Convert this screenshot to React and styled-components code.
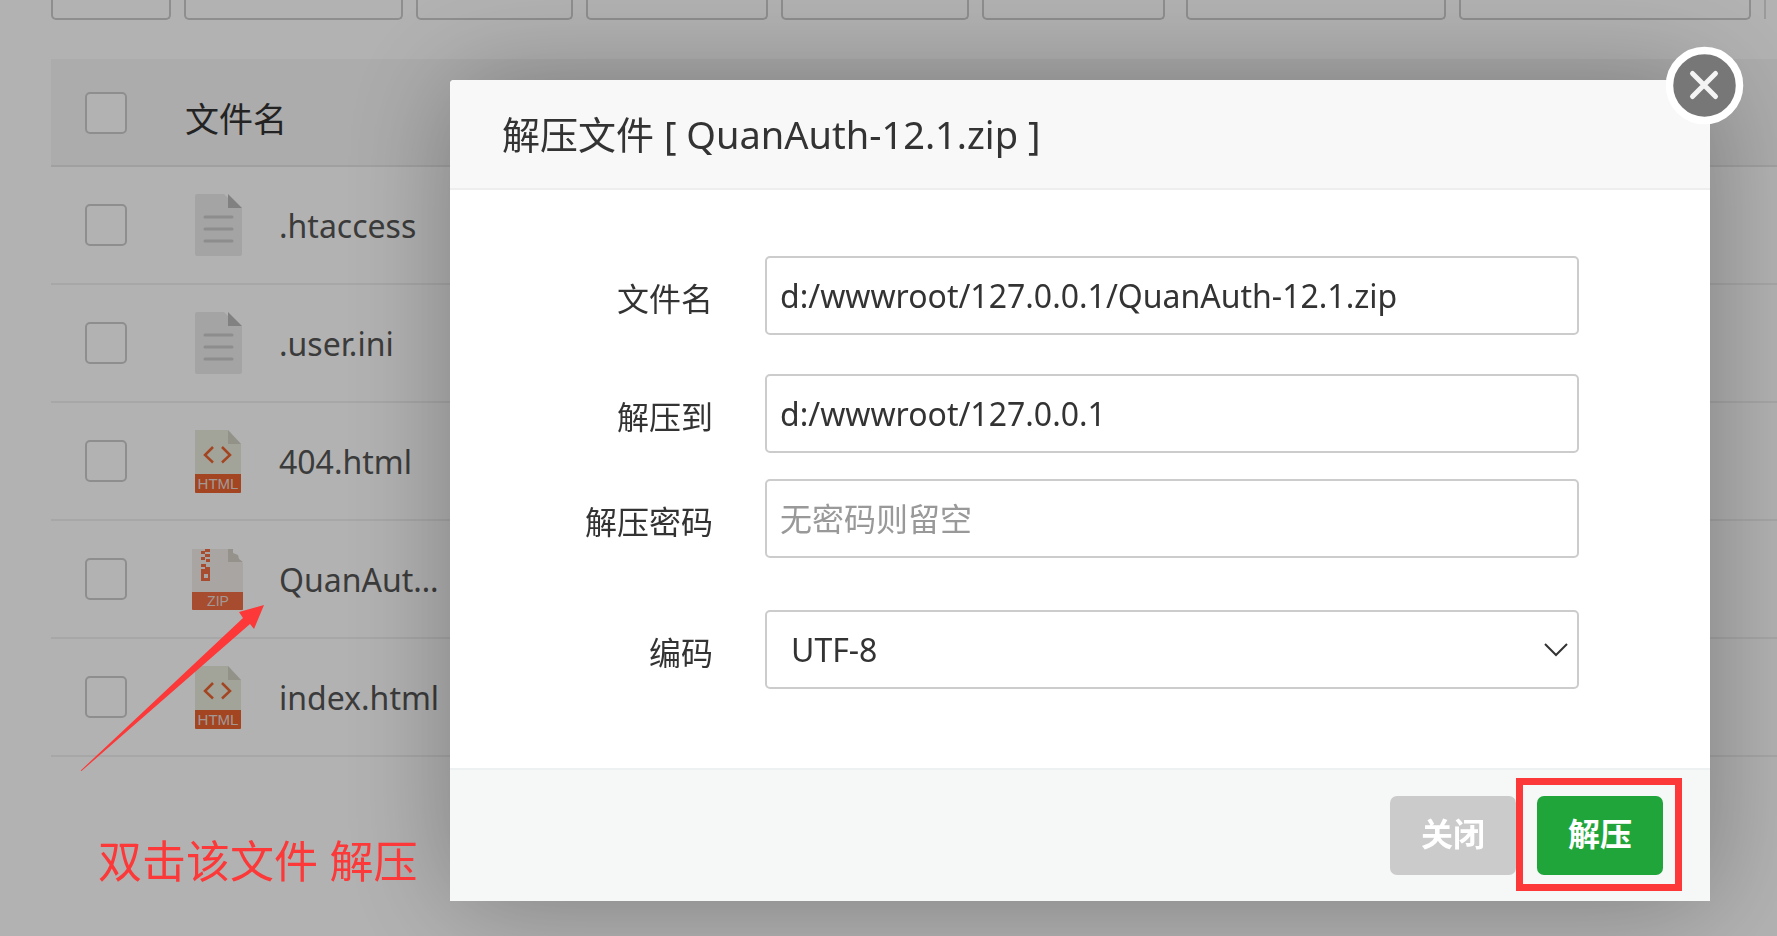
import { useState } from "react";
import styled, { createGlobalStyle } from "styled-components";

const files = [
  { name: ".htaccess", type: "text" },
  { name: ".user.ini", type: "text" },
  { name: "404.html", type: "html" },
  { name: "QuanAuth-12.1.zip", type: "zip" },
  { name: "index.html", type: "html" },
];

const tools = [
  { title: "上传", width: 120 },
  { title: "远程下载", width: 219 },
  { title: "新建", width: 157 },
  { title: "文件夹", width: 182 },
  { title: "收藏夹", width: 188 },
  { title: "分享", width: 183 },
  { title: "终端", width: 260, spaced: true },
  { title: "根目录", width: 292 },
];

const GlobalStyle = createGlobalStyle`
  * {
    box-sizing: border-box;
  }

  body {
    margin: 0;
    background: #fff;
    color: #333;
    font-family: "Noto Sans", "Noto Sans CJK SC", sans-serif;
    font-size: 32px;
  }

  button,
  input,
  select {
    font: inherit;
  }
`;

const Page = styled.div`
  position: relative;
  min-height: 100vh;
  padding-left: 51px;
  overflow: hidden;
`;

const Toolbar = styled.div`
  display: flex;
  gap: 13px;
  height: 59px;
`;

const ToolButton = styled.button`
  flex: none;
  width: ${(props) => props.$width}px;
  height: 20px;
  margin-left: ${(props) => (props.$spaced ? "8px" : "0")};
  padding: 0;
  border: 2px solid #ccc;
  border-top: 0;
  border-radius: 0 0 5px 5px;
  background: #fff;
`;

const ToolDivider = styled.span`
  flex: none;
  width: 2px;
  height: 19px;
  background: #ddd;
`;

const Table = styled.table`
  width: 100%;
  table-layout: fixed;
  border-collapse: separate;
  border-spacing: 0;
`;

const CheckColumn = styled.col`
  width: 119px;
`;

const NameColumn = styled.col`
  width: 272px;
`;

const HeadCell = styled.th`
  height: 108px;
  padding: ${(props) => (props.$check ? "2px 0 0 34px" : "10px 0 0 15px")};
  border-bottom: 2px solid #e6e6e6;
  background: #f6f6f6;
  font-size: 34px;
  font-weight: 400;
  text-align: left;
`;

const Cell = styled.td`
  height: 118px;
  padding: 0 0 0 ${(props) => (props.$check ? "34px" : "20px")};
  border-bottom: 2px solid #efefef;
  color: #555;
`;

const Checkbox = styled.input`
  display: block;
  appearance: none;
  width: 42px;
  height: 42px;
  margin: 0;
  border: 2px solid #ccc;
  border-radius: 5px;
  background: #fff;

  &:checked {
    background: #20a53a;
  }
`;

const FileEntry = styled.div`
  display: flex;
  align-items: center;
  gap: 33px;
`;

const FileName = styled.span`
  flex: 1;
  min-width: 0;
  overflow: hidden;
  text-overflow: ellipsis;
  white-space: nowrap;
`;

const FileIconSvg = styled.svg`
  flex: none;
  width: 56px;
  height: 64px;
`;

const Overlay = styled.div`
  position: fixed;
  inset: 0;
  display: flex;
  align-items: flex-start;
  padding: 80px 67px 0 450px;
  background: rgba(0, 0, 0, 0.3);
`;

const Dialog = styled.form`
  position: relative;
  flex: 1;
  min-width: 0;
  border-radius: 4px 4px 0 0;
  background: #fff;
  box-shadow: 2px 2px 112px rgba(0, 0, 0, 0.3);
`;

const DialogTitle = styled.h1`
  margin: 0;
  padding: 0 52px;
  border-bottom: 2px solid #eee;
  border-radius: 4px 4px 0 0;
  background: #f8f8f8;
  font-size: 38px;
  font-weight: 400;
  line-height: 108px;
`;

const DialogBody = styled.div`
  padding: 66px 131px 79px 0;
`;

const Field = styled.div`
  display: flex;
  align-items: center;
  gap: 52px;
  margin-bottom: ${(props) => props.$gap || 0}px;
`;

const FieldLabel = styled.label`
  width: 263px;
  padding-top: 2px;
  text-align: right;
`;

const TextInput = styled.input`
  flex: 1;
  min-width: 0;
  height: 79px;
  padding: 0 13px;
  border: 2px solid #ccc;
  border-radius: 5px;
  outline: none;
  background: #fff;
  color: #333;

  &::placeholder {
    color: #999;
  }
`;

const SelectBox = styled.div`
  position: relative;
  flex: 1;
  min-width: 0;
`;

const Select = styled.select`
  display: block;
  appearance: none;
  width: 100%;
  height: 79px;
  padding: 0 24px;
  border: 2px solid #ccc;
  border-radius: 5px;
  outline: none;
  background: #fff;
  color: #333;
`;

const SelectArrow = styled.svg`
  position: absolute;
  top: 32px;
  right: 10px;
  width: 26px;
  height: 16px;
  pointer-events: none;
`;

const DialogFooter = styled.div`
  display: flex;
  justify-content: flex-end;
  gap: 21px;
  padding: 26px 47px;
  border-top: 2px solid #edf1f2;
  background: #f6f8f8;
`;

const FooterButton = styled.button`
  width: 126px;
  height: 79px;
  padding: 0 0 8px;
  border: 0;
  border-radius: 7px;
  background: ${(props) => (props.$primary ? "#20a53a" : "#cbcbcb")};
  color: #fff;
  font-weight: 700;
  cursor: pointer;
`;

const Highlight = styled.div`
  position: relative;

  &::after {
    content: "";
    position: absolute;
    inset: -18px -19px -16px -21px;
    border: 7px solid #fc3838;
    pointer-events: none;
  }
`;

const CloseButton = styled.button`
  position: absolute;
  top: -34px;
  right: -34px;
  width: 79px;
  height: 79px;
  padding: 0;
  border: 0;
  border-radius: 50%;
  background: none;
  cursor: pointer;

  & svg {
    display: block;
  }
`;

const Arrow = styled.svg`
  position: absolute;
  top: 600px;
  left: 76px;
  width: 192px;
  height: 176px;
  pointer-events: none;
`;

const Note = styled.p`
  position: absolute;
  top: 830px;
  left: 98px;
  margin: 0;
  color: #fc3838;
  font-size: 44px;
  line-height: 62px;
  white-space: nowrap;
`;

const FileIcon = ({ type }) => {
  if (type === "html") {
    return (
      <FileIconSvg viewBox="0 0 56 64" aria-hidden="true">
        <path d="M5 1h33l13 14v47q0 1-1 1H6q-1 0-1-1V2q0-1 0-1z" fill="#e9eadb" />
        <path d="M38 1v14h13z" fill="#d2d2c5" />
        <path d="M5 45h46v18q0 1-1 1H6q-1 0-1-1z" fill="#eb6330" />
        <path
          d="M23 18l-8 8 8 7.500M32 18l8 8-8 7.500"
          fill="none"
          stroke="#eb6330"
          strokeWidth="2.500"
        />
        <text
          x="28"
          y="60"
          fill="#e8dcd6"
          fontFamily="Liberation Sans, sans-serif"
          fontSize="15"
          textAnchor="middle"
        >
          HTML
        </text>
      </FileIconSvg>
    );
  }

  if (type === "zip") {
    return (
      <FileIconSvg viewBox="0 0 56 64" aria-hidden="true">
        <path d="M2 2h36l15 14v47H2z" fill="#f3ece8" />
        <path d="M38 2h5v4l5 2 1 4 4 3h-15z" fill="#d6d1c7" />
        <path d="M2 45h51v17q0 1-1 1H3q-1 0-1-1z" fill="#ef6e44" />
        <path
          d="M15 2h5v3h-5zM11 4h4v3h-4zM15 7h5v3h-5zM11 10h4v3h-4zM16 12h4v3h-4zM11 17h5v3h4v14h-9V22h4v-2h-4z"
          fill="#ef6e44"
        />
        <path d="M14 27h4v4h-4z" fill="#f3ece8" />
        <text
          x="28"
          y="59"
          fill="#e8dcd6"
          fontFamily="Liberation Sans, sans-serif"
          fontSize="14"
          textAnchor="middle"
        >
          ZIP
        </text>
      </FileIconSvg>
    );
  }

  return (
    <FileIconSvg viewBox="0 0 56 64" aria-hidden="true">
      <path d="M7 1h27l14 14 4 0v46q0 2-2 2H7q-2 0-2-2V3q0-2 2-2z" fill="#ebebeb" />
      <path d="M38 1v14h14z" fill="#b9b9b9" />
      <path
        d="M15 24h27M15 36h27M15 48h27"
        stroke="#cacaca"
        strokeWidth="3"
        strokeLinecap="round"
      />
    </FileIconSvg>
  );
};

const FileTable = () => (
  <Table>
    <colgroup>
      <CheckColumn />
      <NameColumn />
      <col />
    </colgroup>
    <thead>
      <tr>
        <HeadCell $check>
          <Checkbox type="checkbox" aria-label="全选" />
        </HeadCell>
        <HeadCell>文件名</HeadCell>
        <HeadCell />
      </tr>
    </thead>
    <tbody>
      {files.map((file) => (
        <tr key={file.name}>
          <Cell $check>
            <Checkbox type="checkbox" aria-label={file.name} />
          </Cell>
          <Cell>
            <FileEntry>
              <FileIcon type={file.type} />
              <FileName>{file.name}</FileName>
            </FileEntry>
          </Cell>
          <Cell />
        </tr>
      ))}
    </tbody>
  </Table>
);

const UnzipDialog = () => {
  const [source, setSource] = useState("d:/wwwroot/127.0.0.1/QuanAuth-12.1.zip");
  const [target, setTarget] = useState("d:/wwwroot/127.0.0.1");
  const [password, setPassword] = useState("");
  const [coding, setCoding] = useState("UTF-8");

  return (
    <Dialog onSubmit={(e) => e.preventDefault()}>
      <DialogTitle>解压文件 [ QuanAuth-12.1.zip ]</DialogTitle>
      <DialogBody>
        <Field $gap={39}>
          <FieldLabel htmlFor="source">文件名</FieldLabel>
          <TextInput
            id="source"
            value={source}
            onChange={(e) => setSource(e.target.value)}
          />
        </Field>
        <Field $gap={26}>
          <FieldLabel htmlFor="target">解压到</FieldLabel>
          <TextInput
            id="target"
            value={target}
            onChange={(e) => setTarget(e.target.value)}
          />
        </Field>
        <Field $gap={52}>
          <FieldLabel htmlFor="password">解压密码</FieldLabel>
          <TextInput
            id="password"
            placeholder="无密码则留空"
            value={password}
            onChange={(e) => setPassword(e.target.value)}
          />
        </Field>
        <Field>
          <FieldLabel htmlFor="coding">编码</FieldLabel>
          <SelectBox>
            <Select
              id="coding"
              value={coding}
              onChange={(e) => setCoding(e.target.value)}
            >
              <option value="UTF-8">UTF-8</option>
              <option value="GBK">GBK</option>
            </Select>
            <SelectArrow viewBox="0 0 26 16" aria-hidden="true">
              <path d="M2 2l11 11L24 2" fill="none" stroke="#333" strokeWidth="2" />
            </SelectArrow>
          </SelectBox>
        </Field>
      </DialogBody>
      <DialogFooter>
        <FooterButton type="button">关闭</FooterButton>
        <Highlight>
          <FooterButton type="submit" $primary>
            解压
          </FooterButton>
        </Highlight>
      </DialogFooter>
      <CloseButton type="button" aria-label="关闭">
        <svg width="79" height="79" viewBox="0 0 79 79">
          <circle cx="39.500" cy="39.500" r="35" fill="#777" stroke="#fff" strokeWidth="7.500" />
          <path
            d="M27.500 27.500l23 23M50.500 27.500l-23 23"
            stroke="#f4f4f4"
            strokeWidth="5"
            strokeLinecap="round"
          />
        </svg>
      </CloseButton>
    </Dialog>
  );
};

const App = () => (
  <>
    <GlobalStyle />
    <Page>
      <Toolbar>
        {tools.map((tool) => (
          <ToolButton
            key={tool.title}
            type="button"
            aria-label={tool.title}
            $width={tool.width}
            $spaced={tool.spaced}
          />
        ))}
        <ToolDivider />
      </Toolbar>
      <FileTable />
      <Overlay>
        <UnzipDialog />
      </Overlay>
      <Arrow viewBox="0 0 192 176" aria-hidden="true">
        <path
          d="M4.700 170.500L167 18l-4-6 25-7-10 24-4-5L5.500 171z"
          fill="#fc3838"
        />
      </Arrow>
      <Note>双击该文件 解压</Note>
    </Page>
  </>
);

export default App;
